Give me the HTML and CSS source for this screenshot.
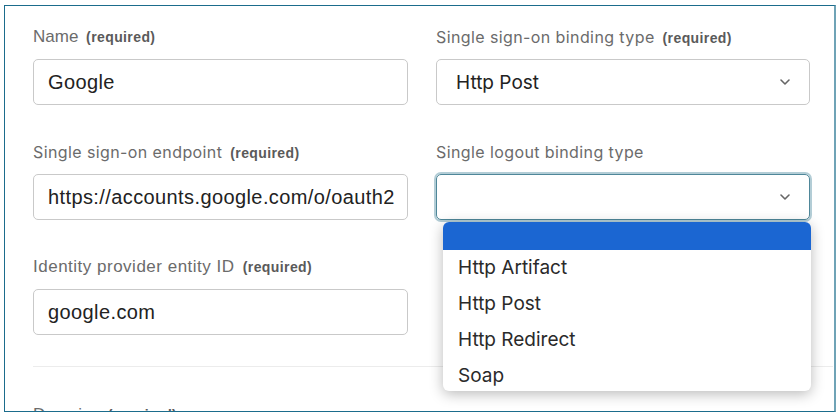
FILE: index.html
```html
<!DOCTYPE html>
<html lang="en">
<head>
  <meta charset="UTF-8" />
  <title>Identity provider settings</title>
  <link rel="stylesheet" href="styles.css">
</head>
<body>

  <div class="frame">
    <form class="idp-form">
      <div class="field">
        <label class="label sans">Name <span class="req">(required)</span></label>
        <div class="input sans">Google</div>
      </div>
      <div class="field">
        <label class="label">Single sign-on binding type <span class="req">(required)</span></label>
        <div class="select">
          <span>Http Post</span>
          <svg class="chev" width="12" height="8" viewBox="0 0 12 8"><path d="M2 2l4 4 4-4" fill="none" stroke="#666" stroke-width="1.6" stroke-linecap="round" stroke-linejoin="round"/></svg>
        </div>
      </div>

      <div class="field">
        <label class="label">Single sign-on endpoint <span class="req">(required)</span></label>
        <div class="input sans">https://accounts.google.com/o/oauth2</div>
      </div>
      <div class="field open">
        <label class="label">Single logout binding type</label>
        <div class="select focused">
          <span></span>
          <svg class="chev" width="12" height="8" viewBox="0 0 12 8"><path d="M2 2l4 4 4-4" fill="none" stroke="#666" stroke-width="1.6" stroke-linecap="round" stroke-linejoin="round"/></svg>
        </div>
        <ul class="menu">
          <li class="selected"></li>
          <li>Http Artifact</li>
          <li>Http Post</li>
          <li>Http Redirect</li>
          <li>Soap</li>
        </ul>
      </div>

      <div class="field">
        <label class="label sans wide">Identity provider entity ID <span class="req">(required)</span></label>
        <div class="input sans">google.com</div>
      </div>
      <div class="field"></div>

      <hr class="divider">

      <div class="field">
        <label class="label sans">Domains <span class="req">(required)</span></label>
      </div>
    </form>
  </div>

</body>
</html>
```

FILE: styles.css
```css
body { margin: 0; background: #fff; font-family: Inter, "Open Sans", sans-serif; }
.frame { margin: 5px 0 0 4px; width: 829px; height: 405px; border: 1px solid #1b6c8c; border-right: 2px solid #6fa3b6; overflow: hidden; }
.idp-form { display: grid; grid-template-columns: 375px 374px; column-gap: 28px; row-gap: 37px; padding: 21px 0 0 28px; position: relative; }
.field { position: relative; }
.label { display: block; height: 20px; line-height: 20px; margin-bottom: 12px; font-size: 16px; color: #6b6b6b; letter-spacing: 0.4px; white-space: nowrap; }
.label.sans { font-family: "Liberation Sans", Arial, sans-serif; font-size: 17px; letter-spacing: 0; }
.label.wide { letter-spacing: 0.5px; }
.req { font-family: "Liberation Sans", Arial, sans-serif; font-weight: bold; font-size: 14px; color: #5a5a5a; margin-left: 3px; letter-spacing: 0.4px; }
.input, .select { box-sizing: border-box; height: 46px; border: 1px solid #c9c9c9; border-radius: 5px; padding: 0 14px; display: flex; align-items: center; font-size: 19px; color: #222; }
.input.sans { font-family: "Liberation Sans", Arial, sans-serif; font-size: 20px; letter-spacing: 0.4px; }
.select { justify-content: space-between; padding: 0 18px 0 19px; }
.select.focused { border-color: #4f8799; box-shadow: 0 0 0 2px #b3cdd6; }
.menu { position: absolute; z-index: 2; top: 80px; left: 7px; width: 368px; margin: 0; padding: 0; list-style: none; background: #fff; border-radius: 6px; overflow: hidden; box-shadow: 0 3px 14px rgba(0,0,0,0.28); }
.menu li { height: 36px; line-height: 36px; padding-left: 15px; font-size: 19px; color: #2a2a2a; }
.menu li:last-child { height: 33px; }
.menu li.selected { height: 28px; background: #1b66d2; }
.divider { grid-column: 1 / 3; margin: -6px 0 0; border: none; border-top: 1px solid #ececec; width: 800px; }
.divider + .field { margin-top: -4px; }
```
